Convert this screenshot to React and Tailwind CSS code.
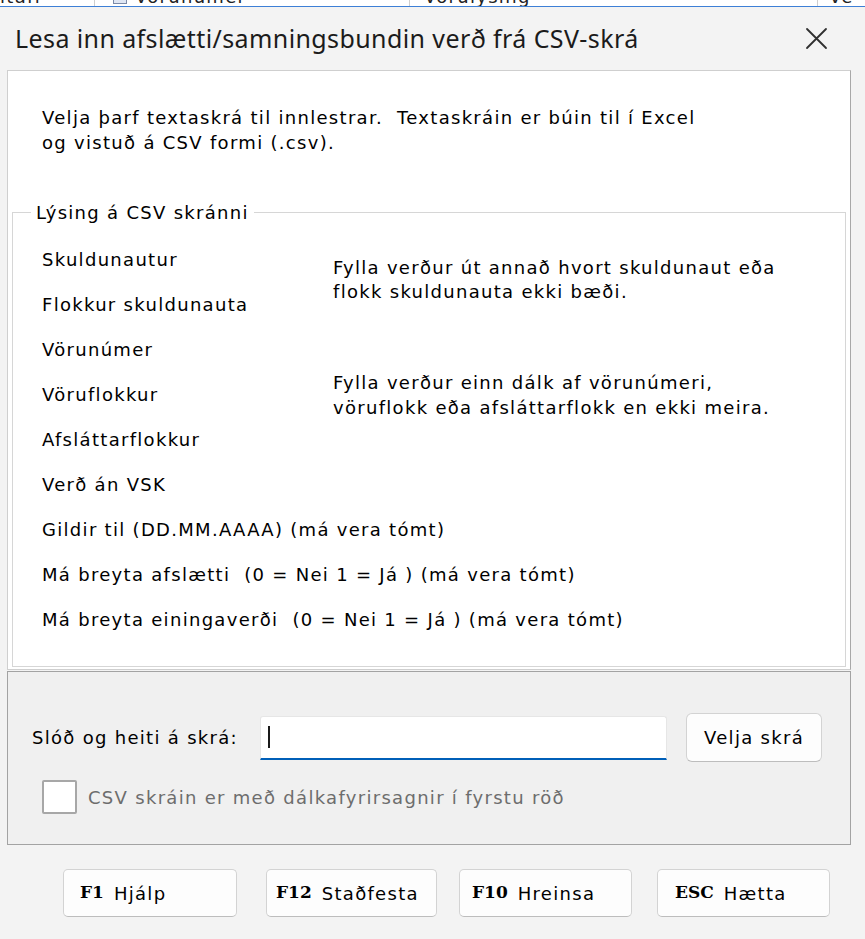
import React from "react";

const sans = "font-['DejaVu_Sans','Liberation_Sans',sans-serif] text-[18px] tracking-[1.3px]";
const keyFont = "font-['DejaVu_Serif','Liberation_Serif',serif] font-bold text-[17px] tracking-[0px]";

function CloseIcon() {
  return (
    <svg width="23" height="23" viewBox="0 0 23 23" fill="none">
      <path d="M2 2 L21 21 M21 2 L2 21" stroke="#2f2f2f" strokeWidth="1.8" strokeLinecap="round" />
    </svg>
  );
}

function KeyButton({ k, label, className }) {
  return (
    <button
      className={`h-[48px] flex items-center bg-[#fdfdfd] border border-[#d3d3d3] border-b-[#bdbdbd] rounded-[5px] text-black ${className}`}
    >
      <span className={keyFont}>{k}</span>
      <span className={`${sans} ml-[10px]`}>{label}</span>
    </button>
  );
}

export default function App() {
  return (
    <div className="w-[865px] h-[939px] bg-[#f3f3f3] overflow-hidden">
      {/* bit of the list window behind the dialog */}
      <div className="h-[6px] bg-white overflow-hidden">
        <div className={`flex h-[18px] -mt-[12px] ${sans} text-[16px] leading-[18px] text-[#222]`}>
          <div className="w-[94px]">itafl</div>
          <div className="w-px bg-[#cfcfcf]" />
          <div className="w-[314px] flex items-center">
            <span className="ml-[18px] w-[14px] h-[14px] border border-[#7a8aa8] bg-[#dfe6f3]" />
            <span className="ml-[8px]">Vörunúmer</span>
          </div>
          <div className="w-px bg-[#cfcfcf]" />
          <div className="w-[407px] pl-[14px]">Vörulýsing</div>
          <div className="w-px bg-[#cfcfcf]" />
          <div className="pl-[11px]">Ve</div>
        </div>
      </div>
      <div className="h-px bg-[#3d7fd6]" />

      <div className="ml-[4px] w-[850px] h-[928px] bg-[#f3f3f3] flex flex-col">
        {/* title bar */}
        <div className="h-[63px] flex items-center justify-between pl-[11px] pr-[26px]">
          <span className="font-['Noto_Sans','Open_Sans',sans-serif] text-[25px] tracking-[0.4px] text-[#1b1b1b]">
            Lesa inn afslætti/samningsbundin verð frá CSV-skrá
          </span>
          <CloseIcon />
        </div>

        {/* white panel */}
        <div className="mx-[3px] h-[600px] bg-white border border-[#cfcfcf] border-r-[#a8a8a8]">
          <div className={`${sans} leading-[25px] pt-[34px] pl-[34px] text-black`}>
            <div className="whitespace-pre">Velja þarf textaskrá til innlestrar.  Textaskráin er búin til í Excel</div>
            <div>og vistuð á CSV formi (.csv).</div>
          </div>

          <fieldset className="mx-[4px] mt-[45px] border border-[#d6d6d6] p-0 pb-[24px] pl-[29px]">
            <legend className={`${sans} leading-[25px] ml-[-11px] px-[5px] text-black`}>Lýsing á CSV skránni</legend>
            <div className={`${sans} text-black mt-[12px] grid grid-cols-[291px_1fr] auto-rows-[45px] items-center`}>
              <div>Skuldunautur</div>
              <div className="row-span-2 self-center -mt-[5px] leading-[24px]">
                Fylla verður út annað hvort skuldunaut eða
                <br />
                flokk skuldunauta ekki bæði.
              </div>
              <div>Flokkur skuldunauta</div>
              <div>Vörunúmer</div>
              <div className="row-span-3 self-center leading-[25px]">
                Fylla verður einn dálk af vörunúmeri,
                <br />
                vöruflokk eða afsláttarflokk en ekki meira.
              </div>
              <div>Vöruflokkur</div>
              <div>Afsláttarflokkur</div>
              <div className="col-span-2">Verð án VSK</div>
              <div className="col-span-2">Gildir til (DD.MM.AAAA) (má vera tómt)</div>
              <div className="col-span-2 whitespace-pre">Má breyta afslætti  (0 = Nei 1 = Já ) (má vera tómt)</div>
              <div className="col-span-2 whitespace-pre">Má breyta einingaverði  (0 = Nei 1 = Já ) (má vera tómt)</div>
            </div>
          </fieldset>
        </div>

        {/* file selection section */}
        <div className="mx-[3px] mt-px h-[174px] bg-[#f0f0f0] border border-[#a3a3a3] pt-[41px]">
          <div className="flex items-center h-[49px]">
            <div className={`${sans} text-black w-[228px] ml-[24px]`}>Slóð og heiti á skrá:</div>
            <div className="w-[407px] h-[44px] bg-white border border-[#e6e6e6] border-b-2 border-b-[#005fb8] rounded-t-[3px] flex items-center">
              <span className="ml-[7px] w-[2px] h-[22px] bg-[#1a1a1a]" />
            </div>
            <button className={`${sans} ml-[19px] w-[136px] h-[49px] bg-[#fdfdfd] border border-[#d3d3d3] border-b-[#bdbdbd] rounded-[6px] text-black`}>
              Velja skrá
            </button>
          </div>
          <div className="flex items-center mt-[18px] pl-[34px]">
            <span className="w-[35px] h-[34px] bg-white border-2 border-[#a7a7a7] rounded-[2px]" />
            <span className={`${sans} ml-[11px] text-[#6d6d6d]`}>CSV skráin er með dálkafyrirsagnir í fyrstu röð</span>
          </div>
        </div>

        {/* bottom buttons */}
        <div className="flex items-center mt-[24px]">
          <KeyButton k="F1" label="Hjálp" className="ml-[59px] w-[174px] pl-[16px]" />
          <KeyButton k="F12" label="Staðfesta" className="ml-[29px] w-[171px] pl-[9px]" />
          <KeyButton k="F10" label="Hreinsa" className="ml-[22px] w-[173px] pl-[12px]" />
          <KeyButton k="ESC" label="Hætta" className="ml-[25px] w-[173px] pl-[17px]" />
        </div>
      </div>
    </div>
  );
}
